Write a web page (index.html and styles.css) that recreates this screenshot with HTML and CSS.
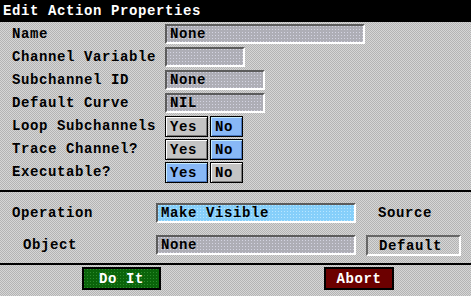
FILE: index.html
```html
<!DOCTYPE html>
<html lang="en">
<head>
    <meta charset="UTF-8">
    <title>Edit Action Properties</title>
    <link rel="stylesheet" href="styles.css">
</head>
<body>
    <div class="dialog">
        <div class="title">Edit Action Properties</div>

        <!-- property rows -->
        <div class="props">
            <div class="label">Name</div>
            <div class="field w-name">None</div>

            <div class="label">Channel Variable</div>
            <div class="field w-var"></div>

            <div class="label">Subchannel ID</div>
            <div class="field w-mid">None</div>

            <div class="label">Default Curve</div>
            <div class="field w-mid">NIL</div>

            <div class="label">Loop Subchannels</div>
            <div class="toggle">
                <span class="opt yes">Yes</span>
                <span class="opt no on">No</span>
            </div>

            <div class="label">Trace Channel?</div>
            <div class="toggle">
                <span class="opt yes">Yes</span>
                <span class="opt no on">No</span>
            </div>

            <div class="label">Executable?</div>
            <div class="toggle">
                <span class="opt yes on">Yes</span>
                <span class="opt no">No</span>
            </div>
        </div>

        <!-- operation -->
        <div class="action">
            <div class="label">Operation</div>
            <div class="field wide active">Make Visible</div>
            <div class="label source">Source</div>

            <div class="label indent">Object</div>
            <div class="field wide">None</div>
            <div class="field plain">Default</div>
        </div>

        <div class="buttons">
            <button class="btn go">Do It</button>
            <button class="btn stop">Abort</button>
        </div>
    </div>
</body>
</html>
```

FILE: styles.css
```css
/* --- dialog shell --- */
html, body {
    margin: 0;
    padding: 0;
    width: 471px;
    height: 296px;
    overflow: hidden;
    background: black;
}

.dialog {
    width: 471px;
    height: 296px;
    font-family: "Liberation Mono", "DejaVu Sans Mono", monospace;
    font-weight: bold;
    font-size: 14px;
    letter-spacing: 0.6px;
    color: black;
    /* dithered grey of the old X toolkit */
    background-color: #c6c6c6;
    background-image: conic-gradient(#d6d6d6 25%, #b4b4b4 0 50%, #d6d6d6 0 75%, #b4b4b4 0);
    background-size: 2px 2px;
    display: flex;
    flex-direction: column;
}

.title {
    height: 22px;
    line-height: 23px;
    padding-left: 3px;
    background: black;
    color: white;
    flex-shrink: 0;
}

.label {
    line-height: 21px;
    white-space: nowrap;
}

/* --- sunken text fields --- */
.field {
    box-sizing: border-box;
    height: 20px;
    line-height: 17px;
    padding-left: 3px;
    border-style: solid;
    border-width: 2px;
    border-color: #5c5c5c white white #5c5c5c;
    background-color: #aeaeb6;
    background-image: conic-gradient(from 270deg at 1px 1px, #d4d4e2 0 90deg, #aeaeb6 0);
    background-size: 3px 3px;
    white-space: nowrap;
    overflow: hidden;
}

.field.active {
    background-color: #86cffa;
    background-image: conic-gradient(from 270deg at 1px 1px, #b8e6ff 0 90deg, #86cffa 0);
}

.field.plain {
    height: 21px;
    line-height: 18px;
    padding-left: 11px;
    background: transparent;
    border-color: #666 white white #666;
}

.w-name { width: 200px; }
.w-var { width: 80px; }
.w-mid { width: 100px; }
.wide { width: 200px; }

/* --- top grid --- */
.props {
    display: grid;
    grid-template-columns: 153px auto;
    grid-auto-rows: 23px;
    align-items: start;
    padding: 2px 0 5px 12px;
    border-bottom: 2px solid black;
    flex-shrink: 0;
}

.toggle {
    display: flex;
    gap: 2px;
}

.opt {
    box-sizing: border-box;
    height: 21px;
    line-height: 20px;
    padding-left: 4px;
    border: 1px solid black;
    background: #c4c4c4;
    box-shadow: inset 1px 1px white, inset -1px -1px #7a7a7a;
}

.opt.yes { width: 43px; }
.opt.no { width: 33px; }

.opt.on {
    background: #88b8f6;
    box-shadow: inset 1px 1px #c6ecff, inset -1px -1px #4a78c0;
}

/* --- operation block --- */
.action {
    display: grid;
    grid-template-columns: 134px 200px 95px;
    column-gap: 10px;
    row-gap: 3px;
    align-items: start;
    height: 73px;
    box-sizing: border-box;
    padding: 11px 0 0 12px;
    border-bottom: 2px solid black;
    flex-shrink: 0;
}

.label.indent {
    padding-left: 11px;
}

.label.source {
    padding-left: 12px;
}

/* --- command buttons --- */
.buttons {
    display: flex;
    gap: 163px;
    padding: 2px 0 0 82px;
}

.btn {
    box-sizing: border-box;
    height: 23px;
    padding: 0;
    border: 2px solid black;
    font-family: inherit;
    font-weight: bold;
    font-size: 14px;
    letter-spacing: 0.6px;
    color: white;
}

.btn.go {
    width: 79px;
    background-color: #0a640a;
    background-image: conic-gradient(from 270deg at 1px 1px, #2c8a2c 0 90deg, #0a640a 0);
    background-size: 3px 3px;
}

.btn.stop {
    width: 70px;
    background: #6c0000;
}
```
